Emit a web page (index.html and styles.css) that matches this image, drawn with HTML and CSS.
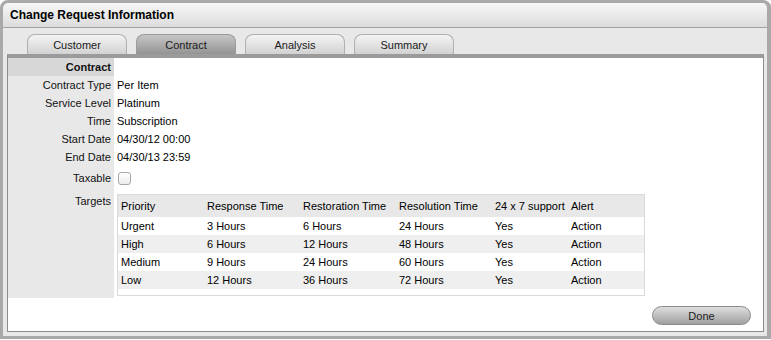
FILE: index.html
```html
<!DOCTYPE html>
<html lang="en">
<head>
    <meta charset="UTF-8">
    <title>Change Request Information</title>
    <link rel="stylesheet" href="styles.css">
</head>
<body>
    <div class="window">
        <div class="window-header">Change Request Information</div>
        <div class="tabs">
            <div class="tab">Customer</div>
            <div class="tab active">Contract</div>
            <div class="tab">Analysis</div>
            <div class="tab">Summary</div>
        </div>
        <div class="panel">
            <div class="row section">
                <div class="label">Contract</div>
                <div class="value"></div>
            </div>
            <div class="row">
                <div class="label">Contract Type</div>
                <div class="value">Per Item</div>
            </div>
            <div class="row">
                <div class="label">Service Level</div>
                <div class="value">Platinum</div>
            </div>
            <div class="row">
                <div class="label">Time</div>
                <div class="value">Subscription</div>
            </div>
            <div class="row">
                <div class="label">Start Date</div>
                <div class="value">04/30/12 00:00</div>
            </div>
            <div class="row">
                <div class="label">End Date</div>
                <div class="value">04/30/13 23:59</div>
            </div>
            <div class="row taxable">
                <div class="label">Taxable</div>
                <div class="value"><span class="checkbox"></span></div>
            </div>
            <div class="row targets">
                <div class="label">Targets</div>
                <div class="value">
                    <div class="targets-box">
                        <table class="targets-table">
                            <thead>
                                <tr>
                                    <th class="col-priority">Priority</th>
                                    <th class="col-time">Response Time</th>
                                    <th class="col-time">Restoration Time</th>
                                    <th class="col-time">Resolution Time</th>
                                    <th class="col-support">24 x 7 support</th>
                                    <th>Alert</th>
                                </tr>
                            </thead>
                            <tbody>
                                <tr>
                                    <td>Urgent</td>
                                    <td>3 Hours</td>
                                    <td>6 Hours</td>
                                    <td>24 Hours</td>
                                    <td>Yes</td>
                                    <td>Action</td>
                                </tr>
                                <tr>
                                    <td>High</td>
                                    <td>6 Hours</td>
                                    <td>12 Hours</td>
                                    <td>48 Hours</td>
                                    <td>Yes</td>
                                    <td>Action</td>
                                </tr>
                                <tr>
                                    <td>Medium</td>
                                    <td>9 Hours</td>
                                    <td>24 Hours</td>
                                    <td>60 Hours</td>
                                    <td>Yes</td>
                                    <td>Action</td>
                                </tr>
                                <tr>
                                    <td>Low</td>
                                    <td>12 Hours</td>
                                    <td>36 Hours</td>
                                    <td>72 Hours</td>
                                    <td>Yes</td>
                                    <td>Action</td>
                                </tr>
                            </tbody>
                        </table>
                    </div>
                </div>
            </div>
            <div class="actions">
                <button type="button" class="btn-done">Done</button>
            </div>
        </div>
    </div>
</body>
</html>
```

FILE: styles.css
```css
body {
    margin: 0;
    background-color: #ffffff;
    font-family: "Liberation Sans", Arial, sans-serif;
    font-size: 11px;
    color: #000;
}

.window {
    width: 764px;
    height: 333px;
    border: 3px solid #a9a9a9;
    border-right-width: 4px;
    border-bottom-width: 3px;
    border-radius: 8px 8px 0 0;
    background-color: #e8e8e8;
    box-shadow: 1px 1px 1px #c8c8c8;
}

.window-header {
    height: 24px;
    line-height: 25px;
    padding-left: 7px;
    font-weight: bold;
    font-size: 12px;
    color: #000;
    background: linear-gradient(#f7f7f7, #dcdcdc);
    border-bottom: 1px solid #a3a3a3;
    border-radius: 6px 6px 0 0;
}

.tabs {
    display: flex;
    gap: 9px;
    padding: 6px 0 0 24px;
    height: 20px;
}

.tab {
    width: 98px;
    height: 19px;
    line-height: 20px;
    text-align: center;
    color: #1a1a1a;
    border: 1px solid #b0b0b0;
    border-bottom: none;
    border-radius: 8px 8px 0 0;
    background: linear-gradient(#f4f4f4, #d2d2d2);
}

.tab.active {
    border-color: #9a9a9a;
    background: linear-gradient(#c6c6c6, #939393);
}

.panel {
    margin: 0 3px 0 4px;
    height: 273px;
    background-color: #fff;
    border: 1px solid #8c8c8c;
    border-top: 4px solid #9b9b9b;
}

.row {
    display: flex;
    height: 18px;
    line-height: 19px;
}

.label {
    width: 103px;
    padding-right: 3px;
    text-align: right;
    background-color: #e8e8e8;
    color: #111;
}

.value {
    padding-left: 3px;
    color: #000;
}

.section .label {
    background-color: #d7d7d7;
    font-weight: bold;
}

.taxable {
    height: 24px;
    line-height: 24px;
}

.checkbox {
    display: inline-block;
    width: 11px;
    height: 11px;
    margin: 6px 0 0 1px;
    vertical-align: top;
    border: 1px solid #a8a8a8;
    border-radius: 3px;
    background: linear-gradient(#ffffff, #ececec);
}

.targets {
    height: 108px;
}

.targets .label {
    padding-top: 3px;
    line-height: 16px;
    height: 105px;
}

.targets .value {
    padding-top: 4px;
}

.targets-box {
    width: 526px;
    padding-bottom: 6px;
    border: 1px solid #dadada;
}

.targets-table {
    width: 100%;
    border-collapse: collapse;
    white-space: nowrap;
}

.targets-table th {
    height: 22px;
    padding: 0 0 0 3px;
    text-align: left;
    font-weight: normal;
    background-color: #e8e8e8;
    color: #000;
}

.targets-table td {
    height: 18px;
    padding: 0 0 0 3px;
    line-height: 18px;
}

.targets-table tbody tr:nth-child(even) td {
    background-color: #efefef;
}

.col-priority {
    width: 83px;
}

.col-time {
    width: 93px;
}

.col-support {
    width: 73px;
}

.actions {
    display: flex;
    justify-content: flex-end;
    padding: 8px 12px 0 0;
}

.btn-done {
    width: 99px;
    height: 19px;
    padding: 0;
    font-family: "Liberation Sans", Arial, sans-serif;
    font-size: 11px;
    color: #222;
    border: 1px solid #8a8a8a;
    border-radius: 10px;
    background: linear-gradient(#dedede, #a0a0a0);
    cursor: pointer;
}
```
